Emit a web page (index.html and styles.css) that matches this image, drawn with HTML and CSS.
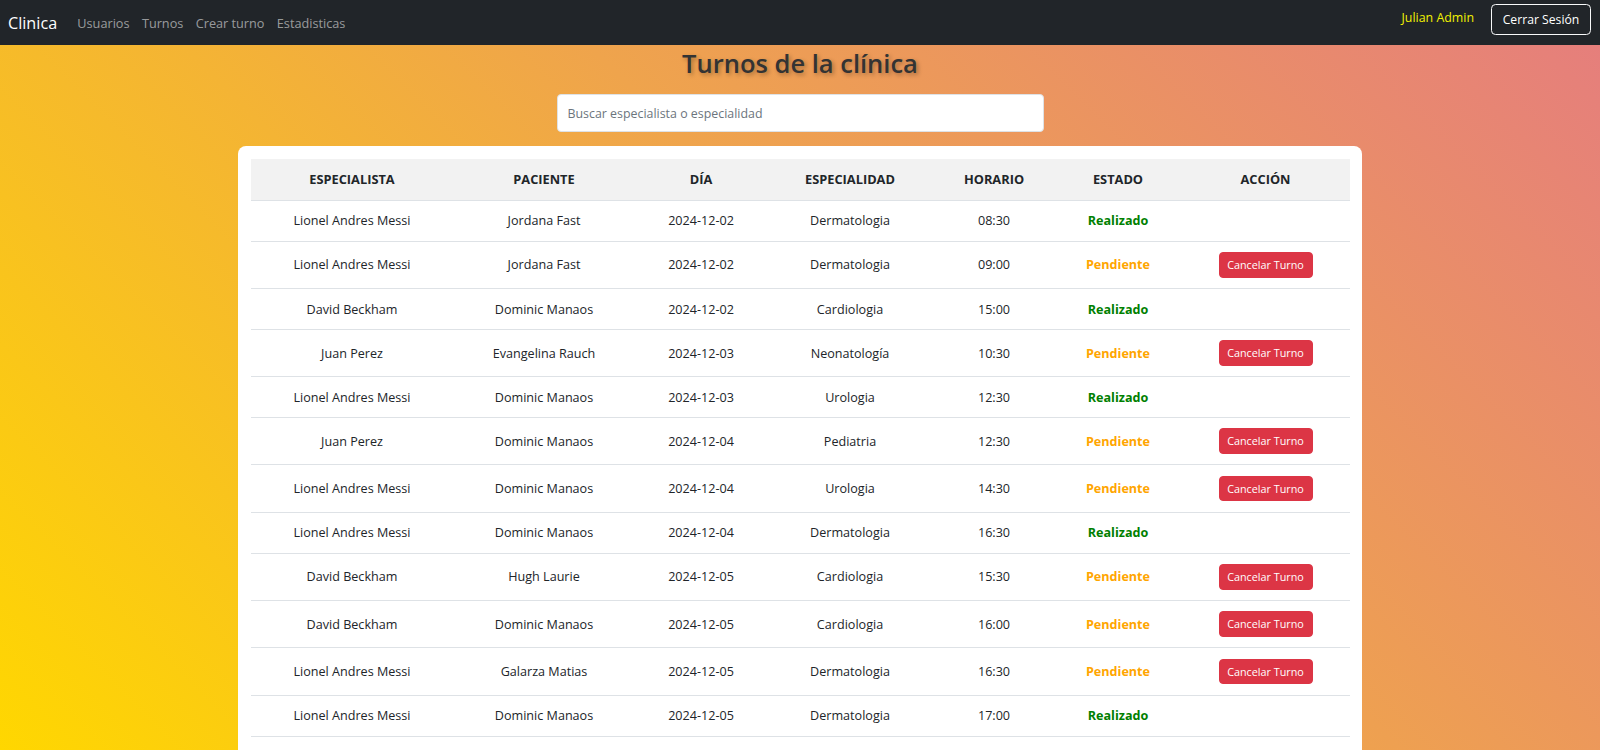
FILE: index.html
```html
<!DOCTYPE html>
<html lang="es">
<head>
<meta charset="utf-8">
<title>Clinica - Turnos</title>
<link rel="stylesheet" href="styles.css">
</head>
<body>
<nav class="navbar">
  <div class="nav-left">
    <a class="brand" href="#">Clinica</a>
    <a class="nav-link" href="#">Usuarios</a>
    <a class="nav-link" href="#">Turnos</a>
    <a class="nav-link" href="#">Crear turno</a>
    <a class="nav-link" href="#">Estadisticas</a>
  </div>
  <div class="nav-right">
    <span class="user-name">Julian Admin</span>
    <button class="btn-logout">Cerrar Sesión</button>
  </div>
</nav>
<main class="page">
  <h2 class="title">Turnos de la clínica</h2>
  <input class="search" type="text" placeholder="Buscar especialista o especialidad">
  <div class="card">
    <table class="turnos">
      <colgroup>
        <col class="c1"><col class="c2"><col class="c3"><col class="c4"><col class="c5"><col class="c6"><col class="c7">
      </colgroup>
      <thead>
        <tr><th>Especialista</th><th>Paciente</th><th>Día</th><th>Especialidad</th><th>Horario</th><th>Estado</th><th>Acción</th></tr>
      </thead>
      <tbody>
        <tr><td>Lionel Andres Messi</td><td>Jordana Fast</td><td>2024-12-02</td><td>Dermatologia</td><td>08:30</td><td class="ok">Realizado</td><td></td></tr>
        <tr><td>Lionel Andres Messi</td><td>Jordana Fast</td><td>2024-12-02</td><td>Dermatologia</td><td>09:00</td><td class="pend">Pendiente</td><td><button class="btn-cancel">Cancelar Turno</button></td></tr>
        <tr><td>David Beckham</td><td>Dominic Manaos</td><td>2024-12-02</td><td>Cardiologia</td><td>15:00</td><td class="ok">Realizado</td><td></td></tr>
        <tr><td>Juan Perez</td><td>Evangelina Rauch</td><td>2024-12-03</td><td>Neonatología</td><td>10:30</td><td class="pend">Pendiente</td><td><button class="btn-cancel">Cancelar Turno</button></td></tr>
        <tr><td>Lionel Andres Messi</td><td>Dominic Manaos</td><td>2024-12-03</td><td>Urologia</td><td>12:30</td><td class="ok">Realizado</td><td></td></tr>
        <tr><td>Juan Perez</td><td>Dominic Manaos</td><td>2024-12-04</td><td>Pediatria</td><td>12:30</td><td class="pend">Pendiente</td><td><button class="btn-cancel">Cancelar Turno</button></td></tr>
        <tr><td>Lionel Andres Messi</td><td>Dominic Manaos</td><td>2024-12-04</td><td>Urologia</td><td>14:30</td><td class="pend">Pendiente</td><td><button class="btn-cancel">Cancelar Turno</button></td></tr>
        <tr><td>Lionel Andres Messi</td><td>Dominic Manaos</td><td>2024-12-04</td><td>Dermatologia</td><td>16:30</td><td class="ok">Realizado</td><td></td></tr>
        <tr><td>David Beckham</td><td>Hugh Laurie</td><td>2024-12-05</td><td>Cardiologia</td><td>15:30</td><td class="pend">Pendiente</td><td><button class="btn-cancel">Cancelar Turno</button></td></tr>
        <tr><td>David Beckham</td><td>Dominic Manaos</td><td>2024-12-05</td><td>Cardiologia</td><td>16:00</td><td class="pend">Pendiente</td><td><button class="btn-cancel">Cancelar Turno</button></td></tr>
        <tr><td>Lionel Andres Messi</td><td>Galarza Matias</td><td>2024-12-05</td><td>Dermatologia</td><td>16:30</td><td class="pend">Pendiente</td><td><button class="btn-cancel">Cancelar Turno</button></td></tr>
        <tr><td>Lionel Andres Messi</td><td>Dominic Manaos</td><td>2024-12-05</td><td>Dermatologia</td><td>17:00</td><td class="ok">Realizado</td><td></td></tr>
      </tbody>
    </table>
  </div>
</main>
</body>
</html>
```
FILE: styles.css
```css
* { box-sizing: border-box; }
html, body { margin: 0; padding: 0; }
body {
  font-family: "Open Sans", "Noto Sans", sans-serif;
  font-size: 12.6px;
  color: #212529;
  min-height: 100vh;
  background: linear-gradient(45deg, #ffd700 0%, #efa44c 55%, #e57d7e 100%);
  background-attachment: fixed;
}
.navbar {
  height: 45px;
  background: #212529;
  display: flex;
  align-items: center;
  justify-content: space-between;
  padding: 0 9px 0 8px;
}
.nav-left { display: flex; align-items: center; }
.brand {
  color: #fff;
  font-size: 16.2px;
  text-decoration: none;
  margin-right: 14px;
}
.nav-link {
  color: rgba(255,255,255,0.55);
  font-size: 12.7px;
  text-decoration: none;
  padding: 0 6.2px;
}
.nav-right { display: flex; align-items: center; gap: 17px; }
.user-name {
  color: #f2f200;
  font-size: 12.4px;
  margin-top: -10px;
}
.btn-logout {
  font-family: inherit;
  font-size: 12.2px;
  color: #fff;
  background: transparent;
  border: 1px solid #f8f9fa;
  border-radius: 4.5px;
  height: 31px;
  width: 100px;
  padding: 0;
  margin-top: -6px;
}
.page {
  display: flex;
  flex-direction: column;
  align-items: center;
  padding-top: 1px;
}
.title {
  margin: 0;
  font-size: 25.5px;
  font-weight: 600;
  line-height: 34px;
  color: #333;
  text-shadow: 2px 2px 4px rgba(0,0,0,0.3);
}
.search {
  margin-top: 14px;
  width: 487px;
  height: 38px;
  border: 1px solid #dee2e6;
  border-radius: 4px;
  padding: 0 10px;
  font-family: inherit;
  font-size: 12.4px;
  color: #212529;
  background: #fff;
}
.search::placeholder { color: #6c757d; }
.card {
  margin-top: 14px;
  width: 1124px;
  background: #fff;
  border-radius: 8px;
  padding: 13px 12px 24px 13px;
}
.turnos {
  width: 100%;
  border-collapse: collapse;
  table-layout: fixed;
}
.c1 { width: 202px; }
.c2 { width: 182px; }
.c3 { width: 132px; }
.c4 { width: 166px; }
.c5 { width: 122px; }
.c6 { width: 126px; }
.c7 { width: 169px; }
.turnos th {
  background: #f2f2f2;
  font-size: 12.8px;
  font-weight: 700;
  text-transform: uppercase;
  line-height: 19px;
  padding: 11px 4px;
  text-align: center;
  border-bottom: 1px solid #dee2e6;
  color: #212529;
}
.turnos td {
  text-align: center;
  line-height: 19px;
  padding: 10.4px 4px;
  border-bottom: 1px solid #dee2e6;
  color: #212529;
  vertical-align: middle;
}
.turnos td.ok { color: #008000; font-weight: 700; }
.turnos td.pend { color: #ffa500; font-weight: 700; }
.btn-cancel {
  display: inline-block;
  vertical-align: middle;
  font-family: inherit;
  font-size: 10.8px;
  line-height: 17.6px;
  height: 25.6px;
  color: #fff;
  background: #dc3545;
  border: 1px solid #dc3545;
  border-radius: 4px;
  padding: 3px 6px;
  width: 94px;
  white-space: nowrap;
}
```
